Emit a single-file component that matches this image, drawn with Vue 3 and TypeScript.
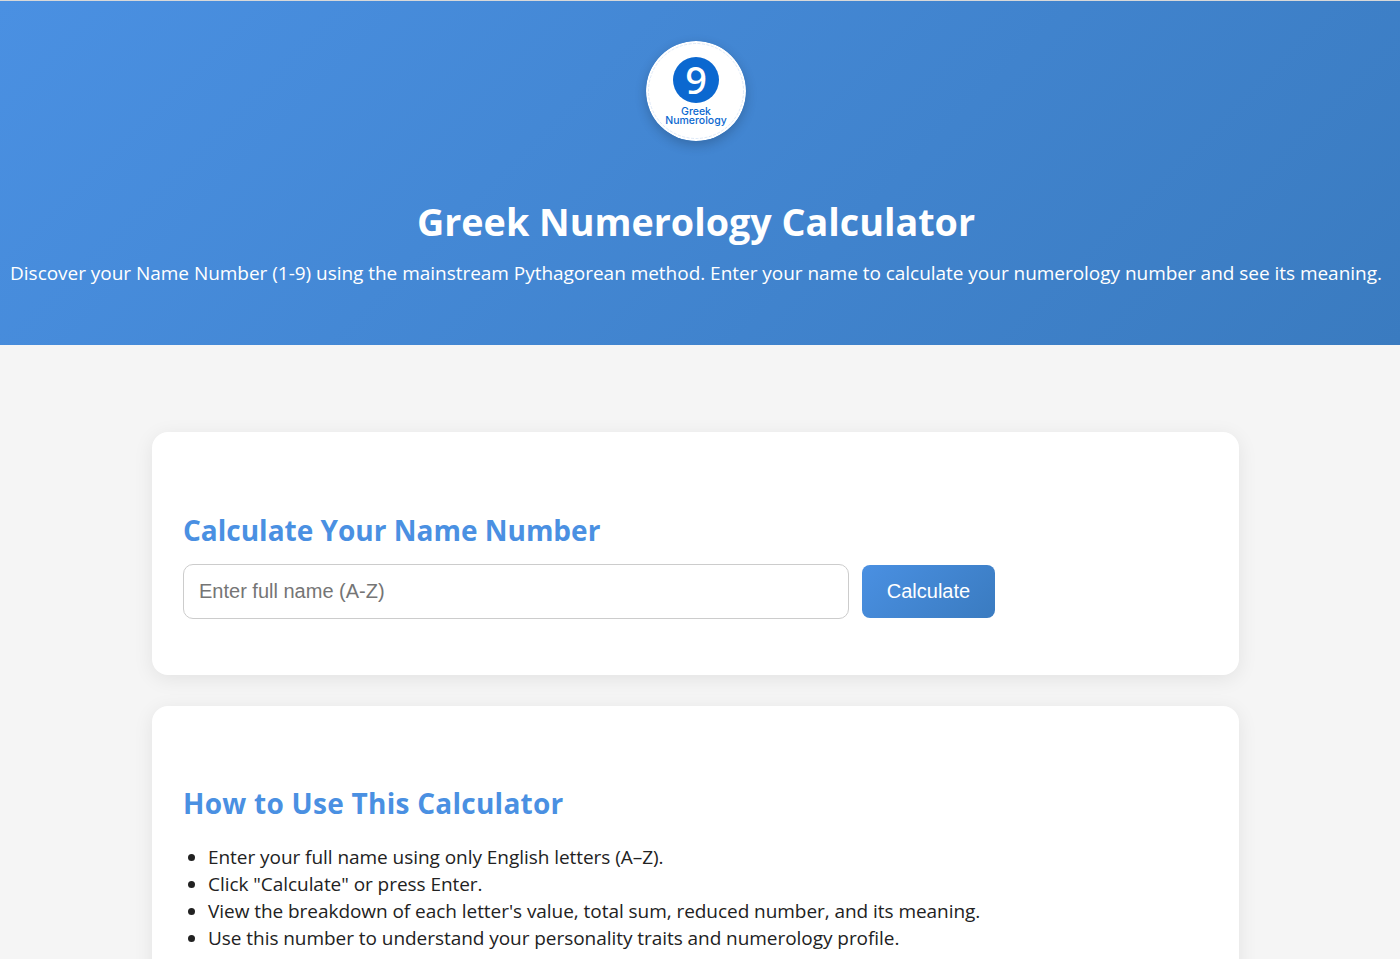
<template>
  <div class="page">
    <header class="hero">
      <svg class="logo" width="100" height="100" viewBox="0 0 100 100" role="img" aria-label="Greek Numerology logo">
        <circle cx="50" cy="50" r="50" fill="#fff" />
        <circle cx="50" cy="50" r="47.5" fill="none" stroke="#d5e3f5" stroke-width="0.8" stroke-dasharray="3 1.5" />
        <circle cx="50" cy="39" r="23" fill="#0b68d0" />
        <text x="50" y="53" class="logo-nine">9</text>
        <text x="50" y="73.5" class="logo-word">Greek</text>
        <text x="50" y="83" class="logo-word">Numerology</text>
      </svg>
      <h1>Greek Numerology Calculator</h1>
      <p>Discover your Name Number (1-9) using the mainstream Pythagorean method. Enter your name to calculate your numerology number and see its meaning.</p>
    </header>

    <main class="content">
      <section class="card">
        <h2>Calculate Your Name Number</h2>
        <form class="calc" @submit.prevent="onSubmit">
          <input v-model="name" type="text" placeholder="Enter full name (A-Z)" />
          <button type="submit">Calculate</button>
        </form>
      </section>

      <section class="card how">
        <h2>How to Use This Calculator</h2>
        <ul>
          <li v-for="step in steps" :key="step">{{ step }}</li>
        </ul>
      </section>
    </main>
  </div>
</template>

<script setup lang="ts">
import { ref } from 'vue';

const name = ref('');

const steps: string[] = [
  'Enter your full name using only English letters (A–Z).',
  'Click "Calculate" or press Enter.',
  "View the breakdown of each letter's value, total sum, reduced number, and its meaning.",
  'Use this number to understand your personality traits and numerology profile.',
];

const onSubmit = () => {
  name.value = name.value.trim();
};
</script>

<style>
html,
body {
  margin: 0;
  overflow-x: hidden;
  background: #f5f5f5;
}
</style>

<style scoped>
.page {
  font-family: "Open Sans", "Noto Sans", sans-serif;
  color: #222;
}
.hero {
  box-sizing: border-box;
  height: 345px;
  padding: 40px 8px 0 0;
  text-align: center;
  color: #fff;
  border-top: 1px solid #d8d8d8;
  background: linear-gradient(135deg, #4a90e2, #3a7bc0);
}
.logo {
  display: block;
  margin: 0 auto;
  border-radius: 50%;
  box-shadow: 0 4px 12px rgba(0, 0, 0, 0.2);
}
.logo-nine {
  font-family: "Noto Sans", sans-serif;
  font-size: 38px;
  font-weight: 500;
  fill: #fff;
  text-anchor: middle;
}
.logo-word {
  font-family: "Inter", sans-serif;
  font-size: 10.5px;
  font-weight: 500;
  fill: #0b68d0;
  text-anchor: middle;
}
h1 {
  margin: 55px 0 0;
  font-size: 37.7px;
  line-height: 52px;
  font-weight: 700;
}
.hero p {
  margin: 12px 0 0;
  font-size: 19px;
  line-height: 27px;
  letter-spacing: -0.03px;
  white-space: nowrap;
}
.content {
  box-sizing: border-box;
  width: 1087px;
  margin: 0 0 0 152px;
  padding-top: 87px;
}
.card {
  box-sizing: border-box;
  height: 243px;
  margin-bottom: 31px;
  padding: 78px 31px 0;
  background: #fff;
  border-radius: 16px;
  box-shadow: 0 4px 20px rgba(0, 0, 0, 0.08);
}
.how {
  height: 320px;
  padding-top: 77px;
}
.how h2 {
  letter-spacing: 0.26px;
}
h2 {
  margin: 0;
  font-size: 28px;
  line-height: 40px;
  font-weight: 700;
  color: #4a90e2;
}
.calc {
  display: flex;
  align-items: center;
  gap: 13px;
  margin-top: 14px;
  width: 812px;
}
input {
  box-sizing: border-box;
  flex: 0 0 666px;
  height: 55px;
  padding: 0 15px;
  font-family: "Liberation Sans", sans-serif;
  font-size: 20px;
  color: #222;
  background: #fff;
  border: 1px solid #ccc;
  border-radius: 10px;
  outline: none;
}
input::placeholder {
  color: #757575;
}
button {
  flex: 0 0 133px;
  height: 53px;
  padding: 0;
  font-family: "Liberation Sans", sans-serif;
  font-size: 20px;
  color: #fff;
  background: linear-gradient(135deg, #4a90e2, #3a7bc0);
  border: 0;
  border-radius: 8px;
  cursor: pointer;
}
ul {
  margin: 21px 0 0;
  padding-left: 25px;
  font-size: 19px;
  line-height: 27px;
  letter-spacing: -0.05px;
}
</style>
